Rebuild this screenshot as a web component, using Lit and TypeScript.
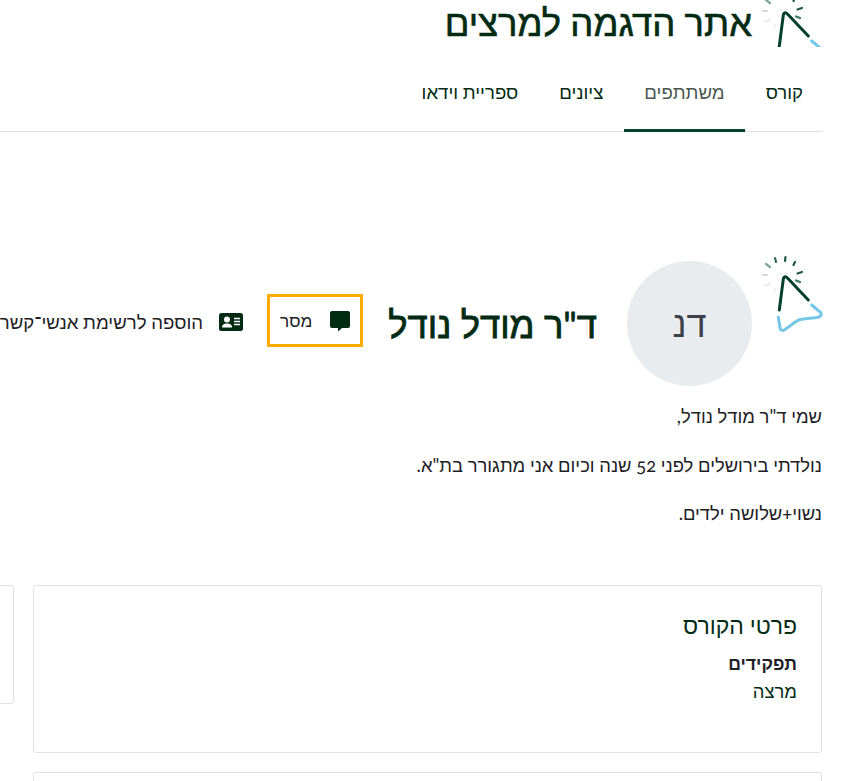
import { LitElement, html, css, svg } from "lit";
import { customElement } from "lit/decorators.js";

const logo = svg`
  <g fill="none" stroke-linecap="round">
    <path d="M15 3 L16 7" stroke="#2f6b55" stroke-width="2.2"/>
    <path d="M25.5 2 L25 6" stroke="#1f5a44" stroke-width="2.2"/>
    <path d="M35 7 L33.5 10" stroke="#1f5a44" stroke-width="2.2"/>
    <path d="M42 17 L37.5 18.5" stroke="#1f5a44" stroke-width="2.2"/>
    <path d="M40 27 L36 25.5" stroke="#3c7560" stroke-width="2.2"/>
    <path d="M6 9 L10 12" stroke="#7fa596" stroke-width="2.2"/>
    <path d="M3 20 L7 20" stroke="#d0dbd6" stroke-width="2.2"/>
    <path d="M5 31 L9 29" stroke="#e8ece9" stroke-width="2.2"/>
    <path d="M14 36 L15 34" stroke="#f0f3f1" stroke-width="2.2"/>
    <path d="M19.3 55 L23.3 24 Q24.5 20 27.5 23 L48.3 45" stroke="#04402d" stroke-width="3"/>
    <path d="M18.3 62.3 L20 73 Q21 76.5 24 75.2 L36 66.5 Q39 64.3 43 64 L57 62.5 Q63 61 60.7 57.5 L51.7 50" stroke="#74c8e6" stroke-width="3"/>
  </g>`;

@customElement("app-root")
export class AppRoot extends LitElement {
  static styles = css`
    :host { display: block; width: 847px; height: 781px; overflow: hidden; background: #fff; direction: rtl;
      font-family: "Lato", "Liberation Sans", sans-serif; font-variant-numeric: oldstyle-nums; color: #1d2125; font-size: 18.4px; }
    .wrap { width: 900px; margin-left: -78px; padding-right: 25px; box-sizing: border-box; }
    .brand { display: flex; gap: 8px; height: 47px; overflow: hidden; }
    .logo { width: 64px; height: 78px; margin-top: -9px; margin-right: -2px; flex: none; }
    .brand h1 { margin: 0; font-size: 36.4px; font-weight: 400; -webkit-text-stroke: 0.6px #032b14; color: #032b14; line-height: 44px; }
    .tabs { display: flex; height: 85px; border-bottom: 1px solid #dee2e6; box-sizing: border-box; font-size: 18.6px; }
    .tab { padding: 6px 20.5px 0; display: flex; align-items: center; color: #032b14; box-sizing: border-box; }
    .tab:first-child { padding-right: 19px; }
    .tab.active { border-bottom: 3px solid #04402d; color: #4a5750; height: 85px; padding-top: 9px; }
    .head { display: flex; align-items: center; margin-top: 129px; height: 125px; }
    .logo2 { align-self: flex-start; margin-top: -6px; margin-left: 8px; }
    .avatar { width: 125px; height: 125px; border-radius: 50%; background: #e9ecef; display: flex; align-items: center; justify-content: center; font-size: 36px; color: #3b4148; flex: none; }
    h2 { margin: 0 30px 0 25px; font-size: 36.4px; font-weight: 400; -webkit-text-stroke: 0.8px #032b14; color: #032b14; white-space: nowrap; line-height: 44px; }
    .btn { display: flex; align-items: center; gap: 17px; border: 3px solid #ffad00; height: 53px; padding: 0 9px 0 10px; box-sizing: border-box; flex: none; margin-top: -6px; font-size: 17.2px; }
    .link { display: flex; align-items: center; gap: 16px; margin-right: 24px; white-space: nowrap; margin-top: -3px; font-size: 18.6px; }
    .ink { fill: #032b14; }
    .body { margin-top: 18px; }
    p { margin: 0 0 24.5px; line-height: 24px; }
    .grid { display: flex; gap: 19px; margin-top: 60px; align-items: flex-start; }
    .card { width: 789px; height: 168px; border: 1px solid #dee2e6; border-radius: 3px; box-sizing: border-box; padding: 24px; flex: none; }
    .card.side { height: 119px; width: 200px; }
    .card h3 { margin: 0 0 12px; font-size: 23px; font-weight: 400; color: #032b14; line-height: 30px; }
    .card b { display: block; font-weight: 700; line-height: 23px; font-size: 17.6px; }
    .card span { display: block; line-height: 32px; color: #032b14; }
    .next { margin-top: 19px; width: 789px; height: 60px; border: 1px solid #dee2e6; border-radius: 3px; box-sizing: border-box; }
  `;

  render() {
    return html`<div class="wrap">
      <div class="brand">
        <svg class="logo" viewBox="0 0 64 78">${logo}</svg>
        <h1>אתר הדגמה למרצים</h1>
      </div>
      <div class="tabs">
        <div class="tab">קורס</div>
        <div class="tab active">משתתפים</div>
        <div class="tab">ציונים</div>
        <div class="tab">ספריית וידאו</div>
      </div>
      <div class="head">
        <svg class="logo logo2" viewBox="0 0 64 78">${logo}</svg>
        <div class="avatar">דנ</div>
        <h2>ד"ר מודל נודל</h2>
        <div class="btn">
          <svg width="22" height="22" viewBox="0 0 22 22"><path class="ink" d="M3 1h16a2 2 0 0 1 2 2v13a2 2 0 0 1-2 2h-6l-4 3.5V18H3a2 2 0 0 1-2-2V3a2 2 0 0 1 2-2z"/></svg>
          <span>מסר</span>
        </div>
        <div class="link">
          <svg width="24" height="18" viewBox="0 0 24 18"><rect class="ink" width="24" height="18" rx="2.5"/><circle cx="8" cy="6.5" r="3" fill="#fff"/><path fill="#fff" d="M3 14.5c0-3 2-4 5-4s5 1 5 4z"/><path stroke="#fff" stroke-width="1.3" d="M15 5.5h6M15 8.5h6M15 11.5h6"/></svg>
          <span>הוספה לרשימת אנשי־קשר</span>
        </div>
      </div>
      <div class="body">
        <p>שמי ד"ר מודל נודל,</p>
        <p>נולדתי בירושלים לפני 52 שנה וכיום אני מתגורר בת"א.</p>
        <p>נשוי+שלושה ילדים.</p>
      </div>
      <div class="grid">
        <div class="card">
          <h3>פרטי הקורס</h3>
          <b>תפקידים</b>
          <span>מרצה</span>
        </div>
        <div class="card side"></div>
      </div>
      <div class="next"></div>
    </div>`;
  }
}
